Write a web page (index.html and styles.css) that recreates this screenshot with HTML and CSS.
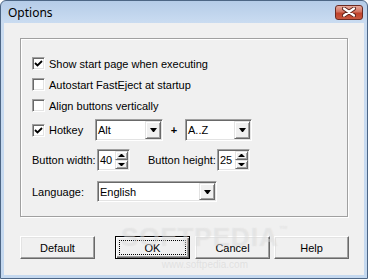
FILE: index.html
```html
<!DOCTYPE html>
<html lang="en">
<head>
<meta charset="UTF-8" />
<title>Options</title>
<link rel="stylesheet" href="styles.css">
</head>
<body>
<div class="window">
  <div class="titlebar">
    <span class="title">Options</span>
    <span class="close">
      <svg width="14" height="10" viewBox="0 0 14 10">
        <path d="M2 1.5 L12 8.5 M12 1.5 L2 8.5" stroke="#5a2018" stroke-width="4" stroke-linecap="round"/>
        <path d="M2 1.5 L12 8.5 M12 1.5 L2 8.5" stroke="#fff" stroke-width="2.2" stroke-linecap="round"/>
      </svg>
    </span>
  </div>

  <div class="client">
    <div class="group">
      <div class="row">
        <span class="check on"><svg width="9" height="9" viewBox="0 0 9 9"><path d="M1 4 L3.5 6.5 L8 2" fill="none" stroke="#000" stroke-width="1.8"/></svg></span>
        <span class="cap">Show start page when executing</span>
      </div>
      <div class="row">
        <span class="check"></span>
        <span class="cap">Autostart FastEject at startup</span>
      </div>
      <div class="row">
        <span class="check"></span>
        <span class="cap">Align buttons vertically</span>
      </div>
      <div class="row hotkey">
        <span class="check on"><svg width="9" height="9" viewBox="0 0 9 9"><path d="M1 4 L3.5 6.5 L8 2" fill="none" stroke="#000" stroke-width="1.8"/></svg></span>
        <span class="cap hk">Hotkey</span>
        <div class="combo mod"><span class="val">Alt</span><span class="drop"></span></div>
        <span class="plus">+</span>
        <div class="combo key"><span class="val">A..Z</span><span class="drop"></span></div>
      </div>
      <div class="row spins">
        <span class="lbl first">Button width:</span>
        <div class="spin"><span class="val">40</span><span class="updown"><span class="up"></span><span class="down"></span></span></div>
        <span class="lbl second">Button height:</span>
        <div class="spin"><span class="val">25</span><span class="updown"><span class="up"></span><span class="down"></span></span></div>
      </div>
      <div class="row lang">
        <span class="lbl first">Language:</span>
        <div class="combo langbox"><span class="val">English</span><span class="drop"></span></div>
      </div>
    </div>

    <div class="buttons">
      <div class="btn">Default</div>
      <div class="btn default ok"><span class="focus">OK</span></div>
      <div class="btn cancel">Cancel</div>
      <div class="btn help">Help</div>
    </div>
  </div>

  <div class="watermark">
    <span class="big">SOFTPEDIA<sup>™</sup></span>
    <span class="url">www.softpedia.com</span>
  </div>
</div>
</body>
</html>
```

FILE: styles.css
```css
body {
  margin: 0;
  font: 11px "Liberation Sans", Arial, sans-serif;
  color: #000;
}
.window {
  width: 368px;
  height: 279px;
  box-sizing: border-box;
  border: 1px solid #4d6685;
  border-radius: 6px 6px 0 0;
  background: linear-gradient(#b5cce8, #cadcf1 22px, #c4d8ef);
  display: flex;
  flex-direction: column;
  position: relative;
  overflow: hidden;
}
.titlebar {
  height: 22px;
  display: flex;
  align-items: center;
  padding: 0 4px 0 7px;
}
.title {
  font: 12px "Noto Sans", "Liberation Sans", sans-serif;
  color: #000;
}
.close {
  margin-left: auto;
  width: 28px;
  height: 15px;
  box-sizing: border-box;
  border: 1px solid #6b2a22;
  border-radius: 3px;
  background: linear-gradient(#e7a99c, #d2725f 45%, #c0432c 55%, #c8573f);
  display: flex;
  align-items: center;
  justify-content: center;
}

.client {
  flex: 1;
  margin: 0 3px 3px;
  background: #f0f0f0;
  padding: 15px 0 0 16px;
}
.group {
  width: 328px;
  height: 179px;
  box-sizing: border-box;
  border: 1px solid #a0a0a0;
  box-shadow: inset 1px 1px 0 #fff, 1px 1px 0 #fff;
  padding: 14px 0 0 11px;
}
.row {
  display: flex;
  align-items: center;
  height: 21px;
}
.check {
  width: 13px;
  height: 13px;
  box-sizing: border-box;
  background: #fff;
  border: 1px solid;
  border-color: #a0a0a0 #fff #fff #a0a0a0;
  box-shadow: inset 1px 1px 0 #696969, inset -1px -1px 0 #e3e3e3;
  margin-right: 4px;
  display: flex;
  align-items: center;
  justify-content: center;
}
.hk { width: 46px; }

.hotkey { height: 22px; margin-top: 3px; }
.spins { height: 22px; margin-top: 8px; }
.lang { height: 21px; margin-top: 10px; }

.combo, .spin {
  height: 100%;
  box-sizing: border-box;
  background: #fff;
  border: 1px solid;
  border-color: #a0a0a0 #fff #fff #a0a0a0;
  box-shadow: inset 1px 1px 0 #696969, inset -1px -1px 0 #e3e3e3;
  padding: 1px;
  display: flex;
}
.val {
  flex: 1;
  display: flex;
  align-items: center;
  padding-left: 1px;
}
.mod { width: 68px; }
.key { width: 67px; }
.langbox { width: 120px; }
.plus {
  width: 22px;
  text-align: center;
  font-weight: bold;
}
.drop, .up, .down {
  box-sizing: border-box;
  background: #f0f0f0;
  border: 1px solid;
  border-color: #e3e3e3 #696969 #696969 #e3e3e3;
  box-shadow: inset 1px 1px 0 #fff, inset -1px -1px 0 #a0a0a0;
  display: flex;
  align-items: center;
  justify-content: center;
}
.drop { width: 16px; }
.drop::after {
  content: "";
  width: 1px;
  border-left: 3px solid transparent;
  border-right: 3px solid transparent;
  border-top: 4px solid #000;
}
.updown {
  width: 13px;
  display: flex;
  flex-direction: column;
}
.up, .down { flex: 1; }
.up::after, .down::after {
  content: "";
  width: 1px;
  border-left: 3px solid transparent;
  border-right: 3px solid transparent;
}
.up::after { border-bottom: 3px solid #000; }
.down::after { border-top: 3px solid #000; }

.spin { width: 33px; }
.lbl.first { width: 65px; }
.lbl.second { width: 69px; margin-left: 18px; }

.buttons {
  display: flex;
  margin-top: 19px;
}
.btn {
  width: 75px;
  height: 23px;
  box-sizing: border-box;
  background: #f0f0f0;
  border: 1px solid;
  border-color: #fff #696969 #696969 #fff;
  box-shadow: inset -1px -1px 0 #a0a0a0, inset 1px 1px 0 #e3e3e3;
  display: flex;
  align-items: center;
  justify-content: center;
}
.btn.default {
  border-color: #000;
  box-shadow: inset 1px 1px 0 #fff, inset -1px -1px 0 #696969, inset -2px -2px 0 #a0a0a0;
}
.ok { margin-left: 20px; }
.cancel { margin-left: 5px; }
.help { margin-left: 4px; }
.focus {
  flex: 1;
  align-self: stretch;
  margin: 3px;
  border: 1px dotted #000;
  display: flex;
  align-items: center;
  justify-content: center;
}

.watermark {
  position: absolute;
  left: 120px;
  top: 221px;
  display: flex;
  flex-direction: column;
  align-items: center;
  pointer-events: none;
}
.watermark .big {
  font: bold 26px "Liberation Sans", Arial, sans-serif;
  letter-spacing: 1px;
  color: rgba(255, 255, 255, 0.3);
  text-shadow: 0 0 1px rgba(170, 170, 170, 0.3);
}
.watermark sup { font-size: 9px; vertical-align: 14px; }
.watermark .url {
  margin-top: 6px;
  font: 10px "Liberation Sans", Arial, sans-serif;
  color: rgba(205, 205, 205, 0.45);
}
```
